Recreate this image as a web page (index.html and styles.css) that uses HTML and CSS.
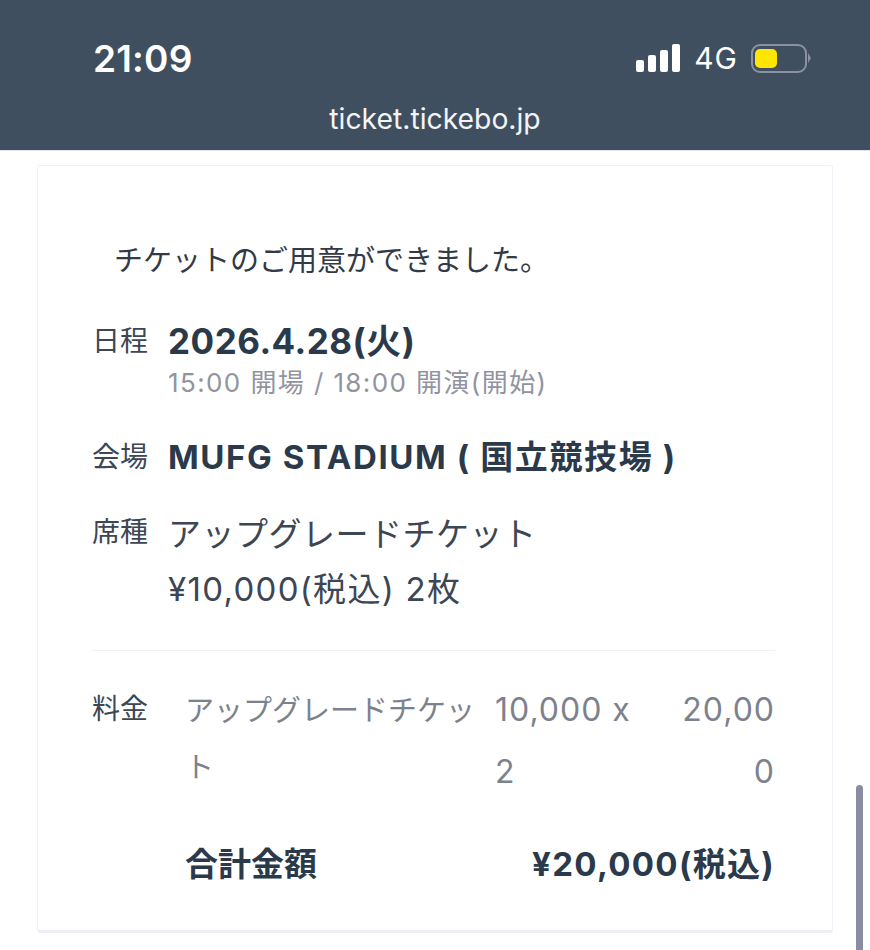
FILE: index.html
```html
<!DOCTYPE html>
<html lang="ja">
<head>
  <meta charset="UTF-8" />
  <meta name="viewport" content="width=device-width, initial-scale=1.0" />
  <title>ticket.tickebo.jp</title>
  <link rel="stylesheet" href="styles.css">
</head>
<body>
  <header class="top-bar">
    <div class="status">
      <span class="time">21:09</span>
      <div class="status-right">
        <div class="signal">
          <span class="bar bar-1"></span>
          <span class="bar bar-2"></span>
          <span class="bar bar-3"></span>
          <span class="bar bar-4"></span>
        </div>
        <span class="network">4G</span>
        <div class="battery">
          <div class="battery-level"></div>
        </div>
        <span class="battery-cap"></span>
      </div>
    </div>
    <div class="url">ticket.tickebo.jp</div>
  </header>

  <main class="content">
    <section class="card">
      <p class="message">チケットのご用意ができました。</p>

      <div class="row row-date">
        <div class="label">日程</div>
        <div class="value">
          <div class="strong date">2026.4.28(火)</div>
          <div class="times">15:00 開場 / 18:00 開演(開始)</div>
        </div>
      </div>

      <div class="row row-venue">
        <div class="label">会場</div>
        <div class="value">
          <div class="strong venue">MUFG STADIUM ( 国立競技場 )</div>
        </div>
      </div>

      <div class="row row-seat">
        <div class="label">席種</div>
        <div class="value seat">
          <div>アップグレードチケット</div>
          <div class="seat-price">¥10,000(税込) 2枚</div>
        </div>
      </div>

      <div class="price">
        <div class="label">料金</div>
        <div class="price-table">
          <div class="price-lines">
            <div class="price-name">アップグレードチケット</div>
            <div class="price-qty">10,000 x 2</div>
            <div class="price-sub">20,000</div>
          </div>
          <div class="total">
            <span>合計金額</span>
            <span class="total-sum">¥20,000(税込)</span>
          </div>
        </div>
      </div>
    </section>
  </main>

  <div class="scrollbar"></div>
</body>
</html>
```

FILE: styles.css
```css
* {
  margin: 0;
  padding: 0;
  box-sizing: border-box;
}

html, body {
  height: 950px;
  overflow: hidden;
}

body {
  font-family: Inter, 'Noto Sans CJK JP', sans-serif;
  background: #fff;
  color: #2a3a4b;
  position: relative;
}

/* Browser top bar */
.top-bar {
  height: 151px;
  background: #3f4f5f;
  color: #fff;
  border-bottom: 1px solid #dfe4ee;
}

.status {
  display: flex;
  align-items: center;
  justify-content: space-between;
  height: 40px;
  padding: 38px 59px 0 93px;
  box-sizing: content-box;
}

.time {
  font-size: 37px;
  font-weight: 600;
  letter-spacing: 0.2px;
}

.status-right {
  display: flex;
  align-items: center;
}

.signal {
  display: flex;
  align-items: flex-end;
  gap: 4px;
  height: 28px;
  margin-right: 14px;
}

.bar {
  width: 8px;
  background: #fff;
  border-radius: 2px;
}

.bar-1 { height: 12px; }
.bar-2 { height: 17px; }
.bar-3 { height: 22px; }
.bar-4 { height: 28px; }

.network {
  font-size: 30px;
  letter-spacing: 1px;
  margin-right: 13px;
}

.battery {
  width: 56px;
  height: 29px;
  border: 2px solid #8a92a2;
  border-radius: 9px;
  padding: 3px 2px;
}

.battery-level {
  width: 22px;
  height: 19px;
  background: #ffe600;
  border-radius: 5px;
}

.battery-cap {
  width: 0;
  height: 0;
  margin-left: 1px;
  border-top: 5px solid transparent;
  border-bottom: 5px solid transparent;
  border-left: 3px solid #8a92a2;
}

.url {
  margin-top: 24px;
  text-align: center;
  font-size: 28.3px;
  color: #f2f4f7;
}

/* Ticket card */
.content {
  padding: 14px 37px 0;
}

.card {
  height: 768px;
  padding: 75px 57px 0 54px;
  border: 1px solid #f1f2f8;
  border-bottom: 3px solid #eeeef8;
  border-radius: 3px;
}

.message {
  font-size: 29px;
  line-height: 40px;
  padding-left: 22px;
  color: #333a45;
}

.row {
  display: flex;
  gap: 20px;
}

.row-date { margin-top: 40px; }
.row-venue { margin-top: 34px; }
.row-seat { margin-top: 35px; }

.label {
  flex: none;
  width: 56px;
  font-size: 28px;
  line-height: 40px;
  white-space: nowrap;
  color: #3d4654;
}

.strong {
  font-weight: 700;
  color: #2a3a4b;
}

.date {
  font-size: 35px;
  line-height: 40px;
  letter-spacing: 0.5px;
}

.times {
  margin-top: 2px;
  font-size: 26px;
  line-height: 40px;
  letter-spacing: 1.4px;
  color: #91949f;
}

.venue {
  font-size: 33px;
  line-height: 40px;
  letter-spacing: 1.6px;
}

.seat {
  margin-top: -5px;
  font-size: 33px;
  line-height: 55px;
  letter-spacing: 0.5px;
  color: #3d4654;
}

.seat-price {
  letter-spacing: 1.3px;
}

/* Price block */
.price {
  display: flex;
  margin-top: 33px;
  padding-top: 38px;
  border-top: 1px solid #f0f0f5;
}

.price-table {
  margin-left: 37px;
  flex: 1;
}

.price-lines {
  display: grid;
  grid-template-columns: 310px 179px 1fr;
  font-size: 32px;
  line-height: 62px;
  letter-spacing: 1px;
  color: #7c828d;
  margin-top: -10px;
}

.price-name {
  font-size: 29px;
  letter-spacing: 0;
  line-height: 57px;
  padding-top: 3px;
}

.price-qty {
  padding-right: 30px;
}

.price-sub {
  text-align: right;
  word-break: break-all;
}

.total {
  display: flex;
  justify-content: space-between;
  margin-top: 39px;
  font-size: 33px;
  line-height: 44px;
  font-weight: 700;
  color: #2a3a4b;
}

.total-sum {
  letter-spacing: 1.3px;
}

/* Overlay scrollbar */
.scrollbar {
  position: absolute;
  top: 785px;
  left: 856px;
  width: 7px;
  height: 165px;
  background: #8a8d9f;
  border-radius: 4px 4px 0 0;
}
```
